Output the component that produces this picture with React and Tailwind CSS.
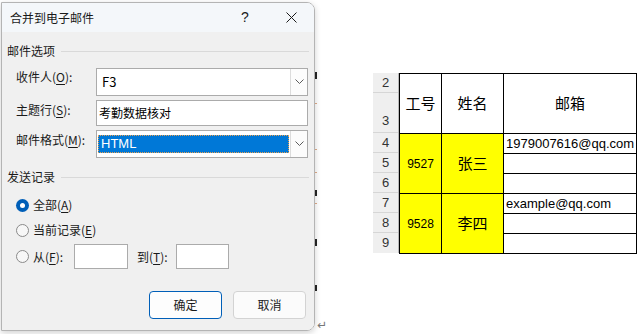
import React from "react";

const cjk = "font-['Noto_Sans_CJK_SC','Noto_Sans',sans-serif]";

function U({ children }) {
  return <span className="underline underline-offset-2 decoration-1">{children}</span>;
}

function Chevron() {
  return (
    <svg width="9" height="6" viewBox="0 0 9 6">
      <polyline points="0.5,0.5 4.5,4.5 8.5,0.5" fill="none" stroke="#5c5c5c" strokeWidth="1" />
    </svg>
  );
}

function GroupHeader({ title, className = "" }) {
  return (
    <div className={"flex items-center h-[16px] " + className}>
      <span className="text-[12px] leading-[16px] text-[#1a1a1a]">{title}</span>
      <div className="flex-1 h-px bg-[#d9d9d9] ml-[6px] mr-[5px]" />
    </div>
  );
}

function Radio({ checked }) {
  return checked ? (
    <div className="w-[13px] h-[13px] rounded-full bg-[#005fb8] flex items-center justify-center shrink-0">
      <div className="w-[5px] h-[5px] rounded-full bg-white" />
    </div>
  ) : (
    <div className="w-[13px] h-[13px] rounded-full border border-[#8a8a8a] bg-[#f7f7f7] shrink-0" />
  );
}

function Dialog() {
  return (
    <div className={"ml-[1px] mt-[2px] w-[314px] h-[329px] border border-[#b4b4b4] rounded-tr-[8px] rounded-br-[8px] overflow-hidden flex flex-col shadow-[0_2px_6px_rgba(0,0,0,0.18)] " + cjk}>
      {/* title bar */}
      <div className="h-[29px] bg-[#f4f7fa] flex items-center shrink-0">
        <span className="pl-[8px] text-[12px] text-[#1a1a1a]">合并到电子邮件</span>
        <div className="ml-auto flex">
          <div className="w-[46px] h-[29px] flex items-center justify-center text-[14px] text-[#1a1a1a] font-['Liberation_Sans',sans-serif]">?</div>
          <div className="w-[46px] h-[29px] flex items-center justify-center">
            <svg width="11" height="11" viewBox="0 0 11 11">
              <line x1="0.5" y1="0.5" x2="10.5" y2="10.5" stroke="#1a1a1a" strokeWidth="1" />
              <line x1="10.5" y1="0.5" x2="0.5" y2="10.5" stroke="#1a1a1a" strokeWidth="1" />
            </svg>
          </div>
        </div>
      </div>

      {/* body */}
      <div className="flex-1 bg-[#f0f0f0] pl-[5px] flex flex-col">
        <GroupHeader title="邮件选项" className="mt-[11px]" />

        <div className="pl-[9px] flex flex-col">
          {/* recipient */}
          <div className="mt-[9px] h-[28px] flex items-start">
            <div className="w-[80px] pt-[1px] text-[12px] leading-[16px] text-[#1a1a1a]">收件人(<U>O</U>):</div>
            <div className="w-[212px] h-[28px] border border-[#ababab] bg-white flex items-stretch">
              <div className="flex-1 pl-[5px] pt-[5px] text-[13px] leading-[16px] text-black">F3</div>
              <div className="w-[17px] border-l border-[#dcdcdc] bg-[#fcfcfc] flex items-center justify-center">
                <Chevron />
              </div>
            </div>
          </div>

          {/* subject */}
          <div className="mt-[4px] h-[26px] flex items-start">
            <div className="w-[80px] pt-[2px] text-[12px] leading-[16px] text-[#1a1a1a]">主题行(<U>S</U>):</div>
            <div className="w-[212px] h-[26px] border border-[#ababab] bg-white pl-[2px] pt-[4px] text-[12px] leading-[16px] text-black">
              考勤数据核对
            </div>
          </div>

          {/* format */}
          <div className="mt-[4px] h-[28px] flex items-start">
            <div className="w-[80px] pt-[2px] text-[12px] leading-[16px] text-[#1a1a1a]">邮件格式(<U>M</U>):</div>
            <div className="w-[212px] h-[28px] border border-[#ababab] bg-white flex items-stretch">
              <div className="flex-1 pl-[1px] py-[4px] pr-[1px]">
                <div className="h-full bg-[#0078d7] border border-dotted border-[#e8a050] pl-[2px] text-[13px] leading-[16px] text-white font-['Liberation_Sans',sans-serif]">
                  HTML
                </div>
              </div>
              <div className="w-[17px] border-l border-[#dcdcdc] bg-[#fcfcfc] flex items-center justify-center">
                <Chevron />
              </div>
            </div>
          </div>
        </div>

        <GroupHeader title="发送记录" className="mt-[11px]" />

        <div className="pl-[9px] flex flex-col text-[12px] leading-[16px] text-[#1a1a1a]">
          <div className="mt-[12px] h-[16px] flex items-center gap-[4px]">
            <Radio checked />
            <span>全部(<U>A</U>)</span>
          </div>
          <div className="mt-[9px] h-[16px] flex items-center gap-[4px]">
            <Radio />
            <span>当前记录(<U>E</U>)</span>
          </div>
          <div className="mt-[6px] h-[25px] flex items-center">
            <div className="w-[58px] flex items-center gap-[4px]">
              <Radio />
              <span>从(<U>F</U>):</span>
            </div>
            <div className="w-[54px] h-[25px] border border-[#ababab] bg-white" />
            <span className="ml-[9px] w-[39px]">到(<U>T</U>):</span>
            <div className="w-[53px] h-[25px] border border-[#ababab] bg-white" />
          </div>
        </div>

        <div className="mt-[22px] flex pl-[142px] gap-[11px]">
          <div className="w-[73px] h-[28px] rounded-[4px] border border-[#005fb8] bg-[#fdfdfd] flex items-center justify-center text-[12px] text-[#1a1a1a]">
            确定
          </div>
          <div className="w-[73px] h-[28px] rounded-[4px] border border-[#d3d3d3] bg-[#fbfbfb] flex items-center justify-center text-[12px] text-[#1a1a1a]">
            取消
          </div>
        </div>
      </div>
    </div>
  );
}

function Gutter() {
  return (
    <div className="relative w-[58px] h-[334px]">
      <div className="absolute left-0 top-[72px] w-[2px] h-[7px] bg-[#222]" />
      <div className="absolute left-0 top-[103px] w-[2px] h-px bg-[#d0a080]" />
      <div className="absolute left-0 top-[149px] w-[2px] h-px bg-[#d0a080]" />
      <div className="absolute left-0 top-[172px] w-[2px] h-px bg-[#d0a080]" />
      <div className="absolute left-0 top-[190px] w-[2px] h-[6px] bg-[#222]" />
      <div className="absolute left-0 top-[203px] w-[2px] h-px bg-[#d0a080]" />
      <div className="absolute left-0 top-[239px] w-[2px] h-[7px] bg-[#222]" />
      <div className="absolute left-0 top-[285px] w-[2px] h-[6px] bg-[#222]" />
      <div className="absolute left-[2px] top-[318px] text-[12px] leading-[14px] text-[#777] font-['DejaVu_Sans',sans-serif]">↵</div>
    </div>
  );
}

function Sheet() {
  const rows = [
    { n: "2", h: "h-[20px]", align: "items-center" },
    { n: "3", h: "h-[40px]", align: "items-end pb-[2px]" },
    { n: "4", h: "h-[20px]", align: "items-center" },
    { n: "5", h: "h-[20px]", align: "items-center" },
    { n: "6", h: "h-[20px]", align: "items-center" },
    { n: "7", h: "h-[20px]", align: "items-center" },
    { n: "8", h: "h-[20px]", align: "items-center" },
    { n: "9", h: "h-[20px]", align: "items-center" },
  ];
  const people = [
    { id: "9527", name: "张三", email: "1979007616@qq.com" },
    { id: "9528", name: "李四", email: "example@qq.com" },
  ];
  return (
    <div className="mt-[73px] flex items-start">
      <div className="w-[26px] bg-[#efefef] border-r border-[#b8b8b8] flex flex-col">
        {rows.map((r, i) => (
          <div
            key={r.n}
            className={
              "flex justify-center text-[13px] text-[#333] font-['Liberation_Sans',sans-serif] " +
              r.h + " " + r.align + (i < rows.length - 1 ? " border-b border-[#d6d6d6]" : "")
            }
          >
            {r.n}
          </div>
        ))}
      </div>
      <div className="border-t border-l border-black flex flex-col">
        <div className="flex h-[60px]">
          <div className={"w-[42px] border-r border-b border-black bg-white flex items-center justify-center text-[15px] text-black " + cjk}>工号</div>
          <div className={"w-[62px] border-r border-b border-black bg-white flex items-center justify-center text-[15px] text-black " + cjk}>姓名</div>
          <div className={"w-[133px] border-r border-b border-black bg-white flex items-center justify-center text-[15px] text-black " + cjk}>邮箱</div>
        </div>
        {people.map((p) => (
          <div key={p.id} className="flex h-[60px]">
            <div className="w-[42px] border-r border-b border-black bg-[#ffff00] flex items-center justify-center text-[12px] text-black font-['Liberation_Sans',sans-serif]">
              {p.id}
            </div>
            <div className={"w-[62px] border-r border-b border-black bg-[#ffff00] flex items-center justify-center text-[15px] text-black " + cjk}>
              {p.name}
            </div>
            <div className="w-[133px] border-r border-b border-black bg-white flex flex-col">
              <div className="h-[20px] border-b border-black pl-[2px] flex items-center text-[13px] text-black font-['Liberation_Sans',sans-serif] whitespace-nowrap">
                {p.email}
              </div>
              <div className="h-[20px] border-b border-black" />
              <div className="flex-1" />
            </div>
          </div>
        ))}
      </div>
    </div>
  );
}

export default function App() {
  return (
    <div className="w-[642px] h-[334px] bg-white flex items-start overflow-hidden">
      <Dialog />
      <Gutter />
      <Sheet />
    </div>
  );
}
